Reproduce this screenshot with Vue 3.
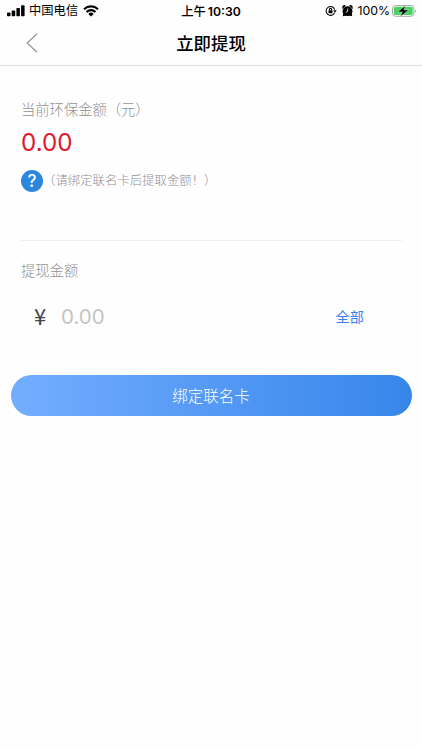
<script setup>
import { ref } from 'vue'

const balance = ref('0.00')
const amount = ref('')

const withdrawAll = () => {
  amount.value = balance.value
}
</script>

<template>
  <div class="page">
    <div class="status-bar">
      <div class="status-left">
        <svg class="signal" width="18" height="12" viewBox="0 0 18 12">
          <rect x="0" y="7.5" width="3.5" height="3.8" rx="0.8" />
          <rect x="4.7" y="5.5" width="3.5" height="5.8" rx="0.8" />
          <rect x="9.4" y="3" width="3.5" height="8.3" rx="0.8" />
          <rect x="14.1" y="0.3" width="3.5" height="11" rx="0.8" />
        </svg>
        <span class="carrier">中国电信</span>
        <svg class="wifi" width="16" height="12" viewBox="0 0 16 12">
          <path d="M1 4.2a10.2 10.2 0 0 1 14 0" />
          <path d="M3.5 6.9a6.5 6.5 0 0 1 9 0" />
          <path class="dot" d="M8 11.6 5.3 8.9a3.9 3.9 0 0 1 5.4 0z" />
        </svg>
      </div>
      <div class="status-time">上午<span>10:30</span></div>
      <div class="status-right">
        <svg class="lock" width="12" height="12" viewBox="0 0 12 12">
          <path d="M9.6 7.6A4.4 4.4 0 1 1 9.7 4.6" />
          <path class="fill" d="M8.2 5.3h3.4l-1.6 2.4z" />
          <rect class="fill" x="3.5" y="5.3" width="4" height="3" rx="0.4" />
          <path d="M4.4 5.3V4.5a1.1 1.1 0 0 1 2.2 0v.8" />
        </svg>
        <svg class="alarm" width="11" height="12" viewBox="0 0 11 12">
          <circle cx="5.5" cy="6.2" r="4.9" />
          <path d="M.4 4.2V2.4A2 2 0 0 1 3.8.6zM10.6 4.2V2.4A2 2 0 0 0 7.2.6zM.8 11.2l.4-3 3 2.4zM10.2 11.2l-.4-3-3 2.4z" />
          <path class="hands" d="M5.7 3.5v2.9l-2 1" />
        </svg>
        <span class="percent">100%</span>
        <svg class="battery" width="25" height="12" viewBox="0 0 25 12">
          <rect x="0.5" y="0.5" width="21.4" height="10.8" rx="3" fill="#fff" stroke="#a4aba5" />
          <rect x="1.7" y="1.7" width="19" height="8.4" rx="1.9" fill="#4cd263" />
          <path d="M23.1 4.2v3.6a2 2 0 0 0 0-3.6z" fill="#a4aba5" />
          <path d="M13.6.4 5.6 6.9h4.7L8.4 11.6l8.3-6.7h-4.8z" fill="#000" stroke="#fff" stroke-width="0.4" />
        </svg>
      </div>
    </div>

    <header class="nav">
      <svg class="back" width="12" height="20" viewBox="0 0 12 20">
        <path d="M11 .8 1.2 10 11 19.2" />
      </svg>
      <h1>立即提现</h1>
    </header>

    <main>
      <section class="balance">
        <p class="label">当前环保金额（元）</p>
        <div class="money">{{ balance }}</div>
        <div class="hint">
          <span class="help">?</span>
          <span class="hint-text">（请绑定联名卡后提取金额！）</span>
        </div>
      </section>

      <section class="withdraw">
        <p class="label">提现金额</p>
        <div class="amount-row">
          <span class="yen">¥</span>
          <input v-model="amount" type="text" placeholder="0.00" />
          <a class="all" @click="withdrawAll">全部</a>
        </div>
      </section>

      <button class="bind-btn">绑定联名卡</button>
    </main>
  </div>
</template>

<style>
body {
  background: #fefefe;
}
</style>

<style scoped>
.page {
  height: 750px;
  overflow: hidden;
  background: #fefefe;
  font-family: Inter, "Noto Sans CJK SC", sans-serif;
  color: #000;
}

.status-bar {
  display: grid;
  grid-template-columns: 1fr auto 1fr;
  align-items: center;
  height: 22px;
  padding: 0 5px 0 7px;
  font-size: 12.3px;
  line-height: 22px;
}

.status-left,
.status-right {
  display: flex;
  align-items: center;
}

.status-right {
  justify-content: flex-end;
}

.carrier {
  margin: 0 5px 0 4px;
}

.wifi path {
  fill: none;
  stroke: #000;
  stroke-width: 2.1;
}

.wifi .dot {
  fill: #000;
  stroke: none;
}

.status-time {
  margin-left: -2px;
  padding-top: 1px;
  font-weight: 500;
  line-height: 21px;
}

.status-time span {
  margin-left: 2px;
  font-size: 12.2px;
  font-weight: 600;
}

.lock path {
  fill: none;
  stroke: #000;
  stroke-width: 1.1;
}

.lock .fill {
  fill: #000;
  stroke: none;
}

.alarm {
  margin: 0 4px 0 5px;
}

.alarm .hands {
  fill: none;
  stroke: #fff;
  stroke-width: 0.8;
}

.percent {
  margin-right: 2px;
}

.nav {
  display: grid;
  grid-template-columns: 1fr auto 1fr;
  align-items: center;
  height: 43px;
  padding: 0 26px;
  border-bottom: 1px solid #dedede;
}

.back {
  margin-top: -2px;
}

.back path {
  fill: none;
  stroke: #999;
  stroke-width: 1.3;
}

h1 {
  margin: 0;
  font-size: 17.4px;
  font-weight: 500;
  line-height: 43px;
}

.balance {
  height: 174px;
  margin: 0 20px 0 21px;
  border-bottom: 1px solid #eee;
}

.label {
  margin: 0;
  color: #929292;
  font-size: 14.3px;
  font-weight: 300;
  line-height: 20px;
}

.balance .label {
  padding-top: 34px;
}

.money {
  margin-top: 8px;
  color: #e0182d;
  font-size: 24.2px;
  line-height: 30px;
}

.hint {
  display: flex;
  align-items: center;
  margin-top: 12px;
}

.help {
  width: 22px;
  height: 22px;
  border-radius: 50%;
  background: #2b87dd;
  color: #fff;
  font-size: 17px;
  font-weight: 500;
  line-height: 22px;
  text-align: center;
}

.hint-text {
  color: #929292;
  font-size: 12.4px;
  font-weight: 300;
  line-height: 22px;
}

.withdraw {
  height: 134px;
  padding: 20px 21px 0;
  box-sizing: border-box;
}

.amount-row {
  display: flex;
  align-items: center;
  height: 30px;
  margin-top: 20px;
  padding: 0 37px 0 13px;
}

.yen {
  width: 27px;
  padding-bottom: 2px;
  color: #444;
  font-family: "Noto Sans CJK SC", sans-serif;
  font-size: 22px;
  line-height: 28px;
}

input {
  flex: 1;
  min-width: 0;
  padding: 0;
  border: none;
  outline: none;
  background: none;
  font-family: inherit;
  font-size: 20.5px;
  color: #333;
}

input::placeholder {
  color: #c4c4c4;
  opacity: 1;
}

.all {
  color: #3b7ff0;
  font-size: 14.2px;
}

.bind-btn {
  display: block;
  width: 401px;
  height: 41px;
  margin: 0 auto;
  padding: 0 0 2px;
  border: none;
  border-radius: 21px;
  background: linear-gradient(90deg, #74adff, #3686ea);
  color: #fff;
  font-family: inherit;
  font-size: 15.5px;
  font-weight: 300;
}
</style>
